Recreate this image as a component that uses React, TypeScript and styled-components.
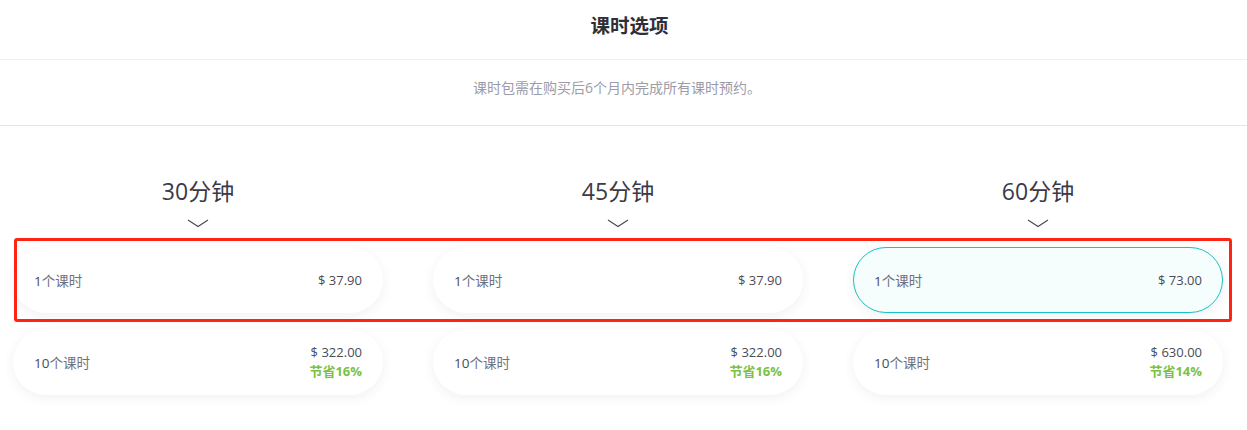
import React from "react";
import styled, { createGlobalStyle } from "styled-components";

const GlobalStyle = createGlobalStyle`
  html, body { margin: 0; padding: 0; background: #ffffff; }
  body { font-family: "Open Sans", "Noto Sans CJK SC", sans-serif; color: #333; }
`;

const Page = styled.div`
  width: 1247px;
  height: 430px;
  background: #fff;
  overflow: hidden;
`;

const TitleBar = styled.div`
  height: 60px;
  border-bottom: 1px solid #f1f1f3;
  display: flex;
  align-items: center;
  justify-content: center;
  padding-left: 12px;
  padding-bottom: 11px;
  box-sizing: border-box;
`;

const Title = styled.h2`
  margin: 0;
  font-size: 19.5px;
  font-weight: 700;
  color: #2f2f3a;
`;

const Notice = styled.div`
  height: 66px;
  border-bottom: 1px solid #e4e4ec;
  display: flex;
  align-items: center;
  justify-content: center;
  font-size: 14px;
  color: #9c9ca8;
  padding-right: 13px;
  padding-bottom: 12px;
  box-sizing: border-box;
`;

const Options = styled.div`
  position: relative;
  padding: 49px 0 0 13px;
  display: grid;
  grid-template-columns: repeat(3, 370px);
  column-gap: 50px;
`;

const Column = styled.div`
  display: flex;
  flex-direction: column;
  align-items: center;
`;

const Duration = styled.div`
  font-size: 23px;
  line-height: 32px;
  color: #3a3a48;
  font-weight: 400;
`;

const Chevron = styled.svg`
  margin-top: 12px;
  display: block;
`;

const Cards = styled.div`
  margin-top: 19px;
  width: 100%;
  display: flex;
  flex-direction: column;
  gap: 16px;
`;

const Card = styled.div<{ $active?: boolean }>`
  height: 66px;
  box-sizing: border-box;
  border-radius: 33px;
  display: flex;
  align-items: center;
  justify-content: space-between;
  padding: 0 20px 0 20px;
  background: ${(p) => (p.$active ? "#f6fdfd" : "#ffffff")};
  border: 1px solid ${(p) => (p.$active ? "#19c2c4" : "transparent")};
  box-shadow: 0 3px 12px rgba(40, 50, 90, 0.07);
`;

const Count = styled.span`
  font-size: 13.5px;
  color: #70707c;
  b {
    font-weight: 400;
    color: #4a4a58;
  }
`;

const PriceBox = styled.div`
  display: flex;
  flex-direction: column;
  align-items: flex-end;
  line-height: 19px;
`;

const Price = styled.span`
  font-size: 13px;
  color: #4a4a58;
`;

const Save = styled.span`
  font-size: 13px;
  font-weight: 700;
  color: #7cc13f;
`;

const Annotation = styled.div`
  position: absolute;
  left: 14px;
  top: 112px;
  width: 1218px;
  height: 84px;
  box-sizing: border-box;
  border: 3px solid #ff2314;
  border-radius: 3px;
  pointer-events: none;
`;

type Opt = { n: string; price: string; save?: string; active?: boolean };
type Col = { label: string; num: string; opts: Opt[] };

const cols: Col[] = [
  {
    label: "分钟",
    num: "30",
    opts: [
      { n: "1", price: "$ 37.90" },
      { n: "10", price: "$ 322.00", save: "节省16%" },
    ],
  },
  {
    label: "分钟",
    num: "45",
    opts: [
      { n: "1", price: "$ 37.90" },
      { n: "10", price: "$ 322.00", save: "节省16%" },
    ],
  },
  {
    label: "分钟",
    num: "60",
    opts: [
      { n: "1", price: "$ 73.00", active: true },
      { n: "10", price: "$ 630.00", save: "节省14%" },
    ],
  },
];

export default function App() {
  return (
    <Page>
      <GlobalStyle />
      <TitleBar>
        <Title>课时选项</Title>
      </TitleBar>
      <Notice>课时包需在购买后6个月内完成所有课时预约。</Notice>
      <Options>
        {cols.map((c) => (
          <Column key={c.num}>
            <Duration>
              {c.num}
              {c.label}
            </Duration>
            <Chevron width="22" height="9" viewBox="0 0 22 9">
              <polyline
                points="1,1 11,7.5 21,1"
                fill="none"
                stroke="#4a4a55"
                strokeWidth="1.1"
              />
            </Chevron>
            <Cards>
              {c.opts.map((o) => (
                <Card key={o.n} $active={o.active}>
                  <Count>
                    <b>{o.n}</b>个课时
                  </Count>
                  <PriceBox>
                    <Price>{o.price}</Price>
                    {o.save && <Save>{o.save}</Save>}
                  </PriceBox>
                </Card>
              ))}
            </Cards>
          </Column>
        ))}
        <Annotation />
      </Options>
    </Page>
  );
}
